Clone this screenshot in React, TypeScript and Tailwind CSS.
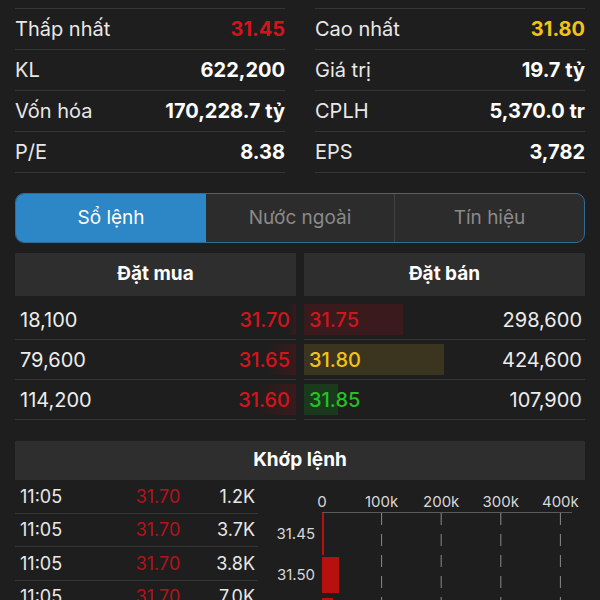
import React from "react";

const stats: [string, string, string, string, string, string][] = [
  ["Thấp nhất", "31.45", "text-[#d4141c]", "Cao nhất", "31.80", "text-[#f2c315]"],
  ["KL", "622,200", "text-white", "Giá trị", "19.7 tỷ", "text-white"],
  ["Vốn hóa", "170,228.7 tỷ", "text-white", "CPLH", "5,370.0 tr", "text-white"],
  ["P/E", "8.38", "text-white", "EPS", "3,782", "text-white"],
];

const buys = [
  { vol: "18,100", price: "31.70", bar: 8 },
  { vol: "79,600", price: "31.65", bar: 30 },
  { vol: "114,200", price: "31.60", bar: 40 },
];

const sells = [
  { vol: "298,600", price: "31.75", bar: 99, color: "text-[#d4141c]", bg: "bg-[#3a1a1c]" },
  { vol: "424,600", price: "31.80", bar: 140, color: "text-[#f2c315]", bg: "bg-[#3b3520]" },
  { vol: "107,900", price: "31.85", bar: 34, color: "text-[#22c322]", bg: "bg-[#1b3a1d]" },
];

const trades = [
  ["11:05", "31.70", "1.2K"],
  ["11:05", "31.70", "3.7K"],
  ["11:05", "31.70", "3.8K"],
  ["11:05", "31.70", "7.0K"],
];

function StatCol({ idx }: { idx: 0 | 1 }) {
  return (
    <div className="flex-1 flex flex-col border-t border-[#363636]">
      {stats.map((r, i) => {
        const label = idx === 0 ? r[0] : r[3];
        const val = idx === 0 ? r[1] : r[4];
        const col = idx === 0 ? r[2] : r[5];
        return (
          <div key={i} className="h-[41px] flex items-center justify-between border-b border-[#363636]">
            <span className="text-[20px] text-[#e8e8e8]">{label}</span>
            <span className={`text-[20px] font-bold ${col}`}>{val}</span>
          </div>
        );
      })}
    </div>
  );
}

function Chart() {
  const x0 = 52;
  const step = 59.6;
  const ticks = ["0", "100k", "200k", "300k", "400k"];
  return (
    <svg width="310" height="122" className="block" style={{ fontFamily: "Inter, sans-serif" }}>
      {ticks.map((t, i) => (
        <text key={t} x={x0 + i * step} y={27} fill="#d8d8d8" fontSize="15" textAnchor="middle">
          {t}
        </text>
      ))}
      <line x1={x0} y1={32.5} x2={302} y2={32.5} stroke="#5a5a5a" strokeWidth="1" />
      {[1, 2, 3, 4].map((i) => (
        <line
          key={i}
          x1={x0 + i * step}
          y1={33}
          x2={x0 + i * step}
          y2={122}
          stroke="#8a8a8a"
          strokeWidth="1"
          strokeDasharray="12 9"
        />
      ))}
      <text x={45} y={59} fill="#d8d8d8" fontSize="15" textAnchor="end">31.45</text>
      <text x={45} y={100} fill="#d8d8d8" fontSize="15" textAnchor="end">31.50</text>
      <rect x={x0} y={33} width={2} height={42} fill="#b80f0f" />
      <rect x={x0} y={77} width={17} height={36} fill="#b80f0f" />
      <rect x={x0} y={118} width={11} height={10} fill="#b80f0f" />
    </svg>
  );
}

export default function App() {
  return (
    <div
      className="w-[600px] h-[600px] overflow-hidden bg-[#1e1e1e] text-white"
      style={{ fontFamily: "Inter, 'Noto Sans', sans-serif" }}
    >
      <div className="pt-[8px] px-[15px] flex gap-[30px]">
        <StatCol idx={0} />
        <StatCol idx={1} />
      </div>

      <div className="mx-[15px] mt-[20px] h-[50px] flex rounded-[9px] border border-[#2f6c97] bg-[#2c2c2c] overflow-hidden">
        <div className="w-[190px] flex items-center justify-center bg-[#2d86c6] text-white text-[19px]">Sổ lệnh</div>
        <div className="flex-1 flex items-center justify-center text-[#8a8a8a] text-[19px] border-r border-[#444]">Nước ngoài</div>
        <div className="w-[189px] flex items-center justify-center text-[#8a8a8a] text-[19px]">Tín hiệu</div>
      </div>

      <div className="mx-[15px] mt-[10px] flex gap-[8px]">
        <div className="flex-1">
          <div className="h-[43px] bg-[#2e2e2e] flex items-center justify-center text-[19px] font-bold">Đặt mua</div>
          <div className="mt-[4px]">
            {buys.map((b) => (
              <div key={b.price} className="relative h-[40px] flex items-center justify-between border-b border-[#363636] pl-[5px] pr-[6px]">
                <div
                  className="absolute right-0 top-[4px] bottom-[4px] bg-gradient-to-l from-[#3a1a1c] to-[#3a1a1c00]"
                  style={{ width: b.bar }}
                />
                <span className="relative text-[20px] text-[#ededed]">{b.vol}</span>
                <span className="relative text-[20px] font-medium text-[#d4141c]">{b.price}</span>
              </div>
            ))}
          </div>
        </div>
        <div className="flex-1">
          <div className="h-[43px] bg-[#2e2e2e] flex items-center justify-center text-[19px] font-bold">Đặt bán</div>
          <div className="mt-[4px]">
            {sells.map((s) => (
              <div key={s.price} className="relative h-[40px] flex items-center justify-between border-b border-[#363636] pl-[5px] pr-[3px]">
                <div className={`absolute left-0 top-[4px] bottom-[4px] ${s.bg}`} style={{ width: s.bar }} />
                <span className={`relative text-[20px] font-medium ${s.color}`}>{s.price}</span>
                <span className="relative text-[20px] text-[#ededed]">{s.vol}</span>
              </div>
            ))}
          </div>
        </div>
      </div>

      <div className="mx-[15px] mt-[21px] h-[39px] bg-[#2e2e2e] flex items-center justify-center text-[19px] font-bold">
        Khớp lệnh
      </div>

      <div className="mx-[15px] flex">
        <div className="w-[243px]">
          {trades.map((t, i) => (
            <div key={i} className="h-[33.5px] flex items-center border-b border-[#363636] pl-[5px] pr-[3px]">
              <span className="w-[98px] text-[18px] text-[#e8e8e8]">{t[0]}</span>
              <span className="w-[80px] text-center text-[18px] text-[#b3141a]">{t[1]}</span>
              <span className="flex-1 text-right text-[18px] text-[#e8e8e8]">{t[2]}</span>
            </div>
          ))}
        </div>
        <div className="ml-[12px]">
          <Chart />
        </div>
      </div>
    </div>
  );
}
